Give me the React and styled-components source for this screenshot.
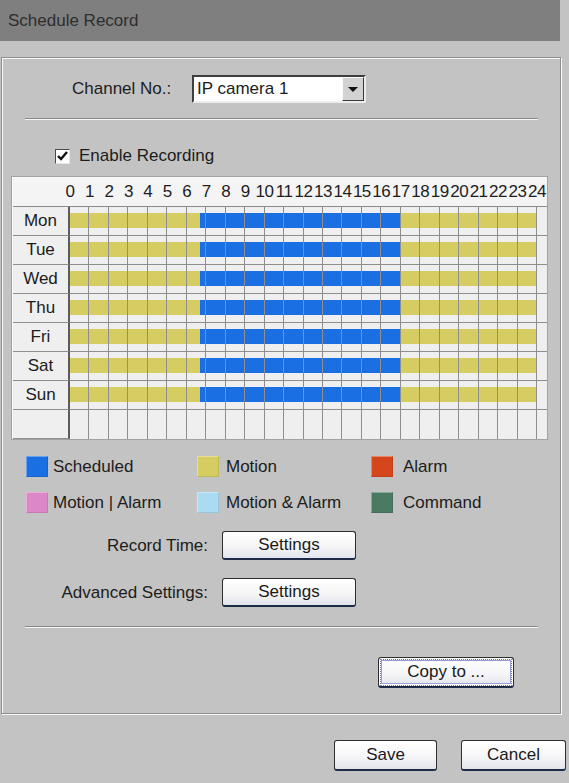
import React from 'react';
import styled, { createGlobalStyle } from 'styled-components';

const GlobalStyle = createGlobalStyle`
  *, *::before, *::after { box-sizing: border-box; }
  html, body { margin: 0; padding: 0; background: #c3c3c3; }
  body {
    font-family: "Liberation Sans", Arial, sans-serif;
    font-size: 17px;
    color: #1c1c1c;
  }
`;

const Page = styled.div`
  width: 569px;
  height: 783px;
  overflow: hidden;
  background: #c3c3c3;
`;

const TitleBar = styled.div`
  width: 560px;
  height: 41px;
  padding-left: 8px;
  display: flex;
  align-items: center;
  background: #7f7f7f;
  color: #2e2e2e;
`;

const Panel = styled.section`
  margin: 16px 0 0 1px;
  width: 560px;
  height: 657px;
  border: 1px solid #8e8e8e;
  box-shadow: inset 1px 1px 0 #fafafa, 1px 1px 0 #fafafa;
  display: flex;
  flex-direction: column;
`;

const ChannelRow = styled.div`
  margin-top: 17px;
  padding-left: 70px;
  display: flex;
  align-items: center;
  height: 28px;
`;

const FieldLabel = styled.span`
  width: 120px;
`;

const Select = styled.div`
  width: 174px;
  height: 28px;
  display: flex;
  background: #fff;
  border: 2px solid;
  border-color: #3e3e3e #ececec #ececec #3e3e3e;
`;

const SelectText = styled.span`
  flex: 1;
  padding-left: 3px;
  display: flex;
  align-items: center;
`;

const DropButton = styled.span`
  width: 22px;
  background: #d2d2d2;
  border: 1px solid;
  border-color: #fafafa #3a3a3a #3a3a3a #fafafa;
  display: flex;
  align-items: center;
  justify-content: center;
  &::after {
    content: '';
    border-left: 5px solid transparent;
    border-right: 5px solid transparent;
    border-top: 5px solid #111;
  }
`;

const Divider = styled.hr`
  margin: ${p => p.$top}px 0 0 23px;
  width: 513px;
  height: 2px;
  border: none;
  border-top: 1px solid #8a8a8a;
  border-bottom: 1px solid #f6f6f6;
`;

const EnableRow = styled.label`
  margin-top: 26px;
  padding-left: 53px;
  height: 20px;
  display: flex;
  align-items: center;
  gap: 9px;
`;

const CheckBox = styled.span`
  width: 15px;
  height: 15px;
  background: #fff;
  border: 1px solid;
  border-color: #4a4a4a #e6e6e6 #e6e6e6 #4a4a4a;
  display: flex;
  align-items: center;
  justify-content: center;
`;

const Schedule = styled.div`
  margin: 11px 0 0 10px;
  width: 535px;
  display: grid;
  grid-template-columns: 57px repeat(24, minmax(0, 1fr)) 10px;
  grid-auto-rows: 29px;
  background: #efefef;
  border-top: 1px solid #fbfbfb;
  border-left: 1px solid #fbfbfb;
  box-shadow: 0 0 0 1px #a2a2a2;
`;

const HeadCell = styled.div`
  background: #f4f4f4;
  border-bottom: 1px solid #8a8a8a;
  display: flex;
  align-items: center;
`;

const HourLabel = styled.span`
  display: block;
  transform: translateX(-50%);
  letter-spacing: -0.5px;
  color: #1e1e1e;
`;

const DayCell = styled.div`
  border-right: 2px solid #5c5c5c;
  border-bottom: 1px solid #8e8e8e;
  display: flex;
  align-items: center;
  justify-content: center;
  background: #efefef;
`;

const SlotCell = styled.div`
  border-right: ${p => (p.$last ? 'none' : '1px solid #8e8e8e')};
  border-bottom: ${p => (p.$bottom ? 'none' : '1px solid #8e8e8e')};
  padding-top: 6px;
`;

const Bar = styled.div`
  height: 15px;
  background: ${p => p.$color};
`;

const Legend = styled.div`
  margin: 17px 0 0 24px;
  display: grid;
  grid-template-columns: 171px 174px auto;
  row-gap: 15px;
`;

const LegendItem = styled.div`
  display: flex;
  align-items: center;
  gap: ${p => p.$gap}px;
  height: 21px;
`;

const Swatch = styled.span`
  width: 22px;
  height: 21px;
  background: ${p => p.$color};
  border: 1px solid rgba(255, 255, 255, 0.35);
  border-right-color: rgba(0, 0, 0, 0.1);
  border-bottom-color: rgba(0, 0, 0, 0.1);
`;

const SettingsGrid = styled.div`
  margin-top: 18px;
  display: grid;
  grid-template-columns: 206px 134px;
  column-gap: 14px;
  row-gap: 18px;
  align-items: center;
`;

const SettingsLabel = styled.span`
  text-align: right;
`;

const Button = styled.button`
  width: ${p => p.$w}px;
  height: ${p => p.$h}px;
  padding: 0;
  font: inherit;
  color: #1a1a1a;
  background: linear-gradient(#ffffff, #f6f6f8 55%, #e3e5ec);
  border: 1px solid #2e2e2e;
  border-bottom: 2px solid #1f2c48;
  border-radius: 3px;
  box-shadow: ${p => (p.$focus ? 'inset 0 0 0 2px #fff, inset 0 0 0 3px #9c9cd4' : 'none')};
  outline: ${p => (p.$focus ? '1px dotted #7070b8' : 'none')};
  outline-offset: -3px;
  cursor: default;
`;

const CopyRow = styled.div`
  margin-top: 29px;
  padding-right: 46px;
  display: flex;
  justify-content: flex-end;
`;

const Footer = styled.div`
  margin-top: 26px;
  padding-right: 3px;
  display: flex;
  justify-content: flex-end;
  gap: 24px;
`;

const YELLOW = '#d5cd62';
const BLUE = '#1a6fe2';
const DAYS = ['Mon', 'Tue', 'Wed', 'Thu', 'Fri', 'Sat', 'Sun'];
const hours = Array.from({ length: 24 }, (_, i) => i);

// motion all day, scheduled from about 6:40 to 17:00
const slotColor = h => {
  if (h === 6) return `linear-gradient(to right, ${YELLOW} 70%, ${BLUE} 70%)`;
  return h >= 7 && h < 17 ? BLUE : YELLOW;
};

const LEGEND = [
  ['Scheduled', BLUE, 5],
  ['Motion', YELLOW, 7],
  ['Alarm', '#d6461c', 10],
  ['Motion | Alarm', '#dd88c6', 5],
  ['Motion & Alarm', '#aadbf3', 7],
  ['Command', '#4b7a62', 10],
];

export default function App() {
  return (
    <Page>
      <GlobalStyle />
      <TitleBar>Schedule Record</TitleBar>
      <Panel>
        <ChannelRow>
          <FieldLabel>Channel No.:</FieldLabel>
          <Select>
            <SelectText>IP camera 1</SelectText>
            <DropButton />
          </Select>
        </ChannelRow>
        <Divider $top={15} />
        <EnableRow>
          <CheckBox>
            <svg width="11" height="10" viewBox="0 0 11 10">
              <path d="M1 5 L4 8 L10 1" fill="none" stroke="#111" strokeWidth="2.4" />
            </svg>
          </CheckBox>
          Enable Recording
        </EnableRow>
        <Schedule>
          <HeadCell />
          {hours.map(h => (
            <HeadCell key={h}><HourLabel>{h}</HourLabel></HeadCell>
          ))}
          <HeadCell><HourLabel>24</HourLabel></HeadCell>
          {DAYS.map(day => (
            <React.Fragment key={day}>
              <DayCell>{day}</DayCell>
              {hours.map(h => (
                <SlotCell key={h}><Bar $color={slotColor(h)} /></SlotCell>
              ))}
              <SlotCell $last />
            </React.Fragment>
          ))}
          <DayCell />
          {hours.map(h => <SlotCell key={h} $bottom />)}
          <SlotCell $last $bottom />
        </Schedule>
        <Legend>
          {LEGEND.map(([name, color, gap]) => (
            <LegendItem key={name} $gap={gap}>
              <Swatch $color={color} />
              {name}
            </LegendItem>
          ))}
        </Legend>
        <SettingsGrid>
          <SettingsLabel>Record Time:</SettingsLabel>
          <Button $w={134} $h={29}>Settings</Button>
          <SettingsLabel>Advanced Settings:</SettingsLabel>
          <Button $w={134} $h={29}>Settings</Button>
        </SettingsGrid>
        <Divider $top={19} />
        <CopyRow>
          <Button $w={136} $h={31} $focus>Copy to ...</Button>
        </CopyRow>
      </Panel>
      <Footer>
        <Button $w={103} $h={31}>Save</Button>
        <Button $w={105} $h={31}>Cancel</Button>
      </Footer>
    </Page>
  );
}
